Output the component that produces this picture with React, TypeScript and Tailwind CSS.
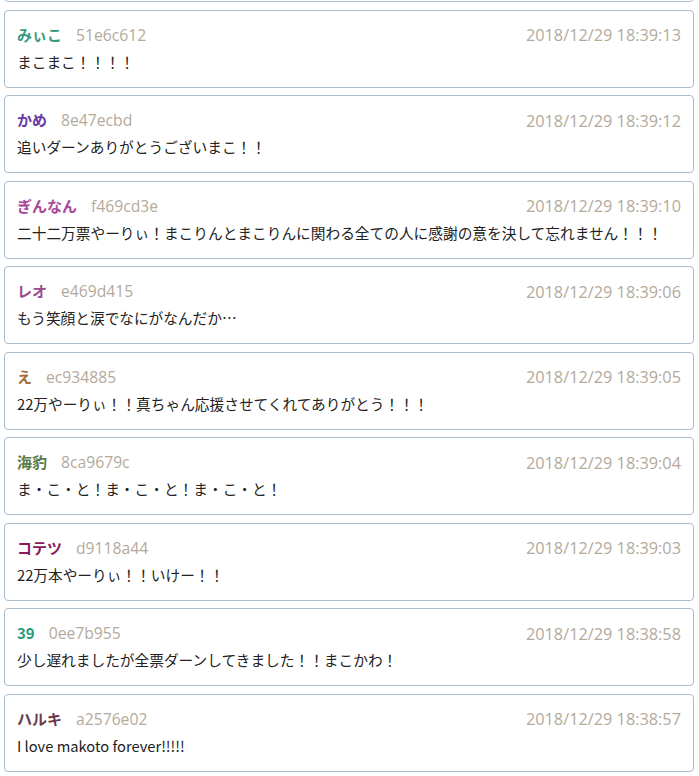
import React from 'react';

type Comment = {
  name: string;
  color: string;
  hash: string;
  date: string;
  body: string;
};

const COMMENTS: Comment[] = [
  { name: 'みぃこ', color: 'text-[#3a9a80]', hash: '51e6c612', date: '2018/12/29 18:39:13', body: 'まこまこ！！！！' },
  { name: 'かめ', color: 'text-[#6a3aa4]', hash: '8e47ecbd', date: '2018/12/29 18:39:12', body: '追いダーンありがとうございまこ！！' },
  { name: 'ぎんなん', color: 'text-[#a8489a]', hash: 'f469cd3e', date: '2018/12/29 18:39:10', body: '二十二万票やーりぃ！まこりんとまこりんに関わる全ての人に感謝の意を決して忘れません！！！' },
  { name: 'レオ', color: 'text-[#9a4a8e]', hash: 'e469d415', date: '2018/12/29 18:39:06', body: 'もう笑顔と涙でなにがなんだか…' },
  { name: 'え', color: 'text-[#a06a30]', hash: 'ec934885', date: '2018/12/29 18:39:05', body: '22万やーりぃ！！真ちゃん応援させてくれてありがとう！！！' },
  { name: '海豹', color: 'text-[#5a7a4a]', hash: '8ca9679c', date: '2018/12/29 18:39:04', body: 'ま・こ・と！ま・こ・と！ま・こ・と！' },
  { name: 'コテツ', color: 'text-[#8a1a5a]', hash: 'd9118a44', date: '2018/12/29 18:39:03', body: '22万本やーりぃ！！いけー！！' },
  { name: '39', color: 'text-[#2a9a7a]', hash: '0ee7b955', date: '2018/12/29 18:38:58', body: '少し遅れましたが全票ダーンしてきました！！まこかわ！' },
  { name: 'ハルキ', color: 'text-[#6a3a4a]', hash: 'a2576e02', date: '2018/12/29 18:38:57', body: 'I love makoto forever!!!!!' },
];

const CommentCard: React.FC<{ c: Comment }> = ({ c }) => (
  <div className="border border-[#a9bccf] rounded-[4px] bg-white px-[12px] pt-[13px] pb-[12px] h-[78px]">
    <div className="flex items-center justify-between h-[24px]">
      <div className="flex items-baseline">
        <span className={`${c.color} font-bold text-[15px] font-['Noto_Sans_CJK_JP',sans-serif]`}>{c.name}</span>
        <span className="ml-[14px] text-[15.7px] text-[#b3aa9c] font-['Open_Sans',sans-serif]">{c.hash}</span>
      </div>
      <span className="text-[16.3px] text-[#b3aa9c] font-['Open_Sans',sans-serif]">{c.date}</span>
    </div>
    <div className="mt-[3px] text-[14.7px] leading-[22px] text-[#222] font-['Noto_Sans_CJK_JP',sans-serif] whitespace-nowrap">
      {c.body}
    </div>
  </div>
);

export default function App() {
  return (
    <div className="w-[699px] h-[776px] overflow-hidden bg-white">
      <div className="px-[4px] pr-[5px]">
        {/* partial card from above */}
        <div className="-mt-[76px] border border-[#a9bccf] rounded-[4px] h-[78px]" />
        <div className="flex flex-col gap-[7.5px] mt-[7.5px]">
          {COMMENTS.map((c) => (
            <CommentCard key={c.hash} c={c} />
          ))}
        </div>
      </div>
    </div>
  );
}
